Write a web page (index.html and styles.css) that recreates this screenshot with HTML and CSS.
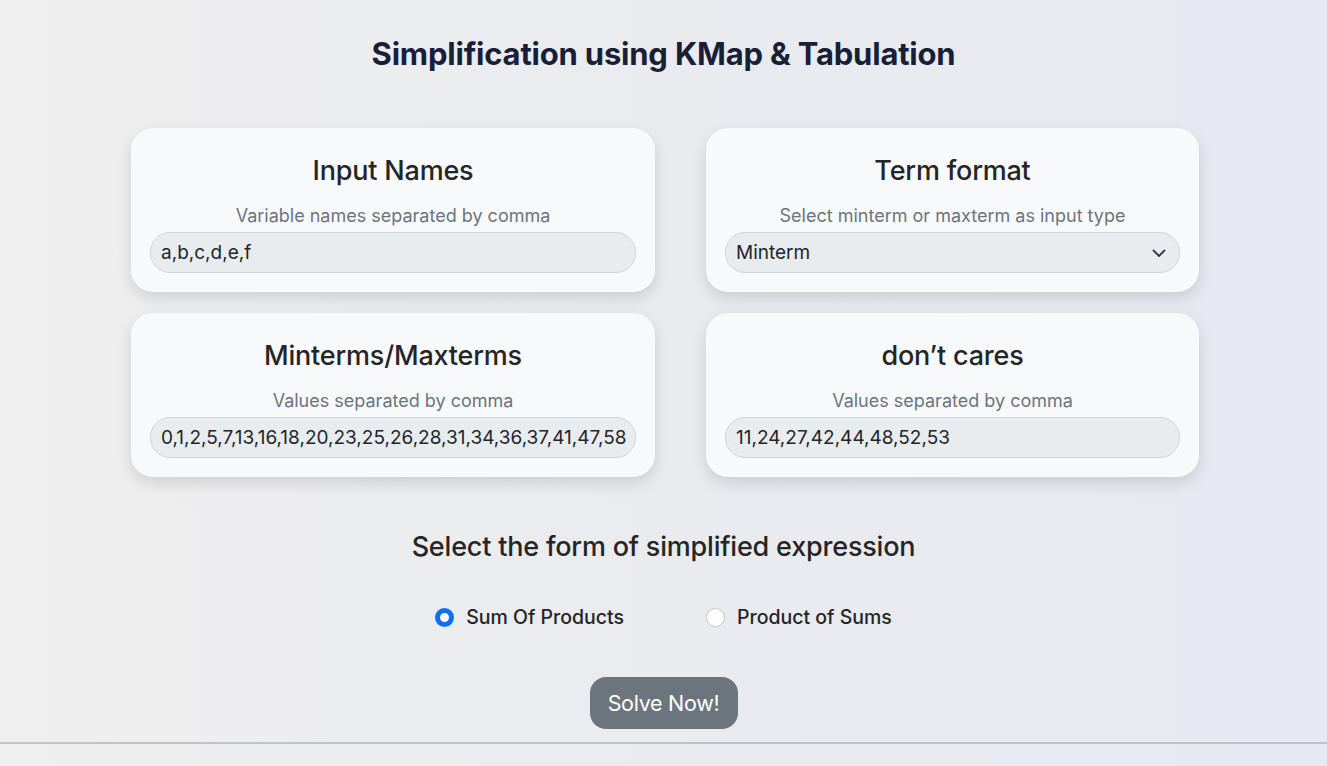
FILE: index.html
```html
<!DOCTYPE html>
<html lang="en">
<head>
<meta charset="utf-8">
<title>Simplification using KMap &amp; Tabulation</title>
<link rel="stylesheet" href="styles.css">
</head>
<body>
<main class="page">
  <h1 class="title">Simplification using KMap &amp; Tabulation</h1>
  <section class="grid">
    <div class="card">
      <h2 class="card-title">Input Names</h2>
      <p class="hint">Variable names separated by comma</p>
      <input class="field" type="text" value="a,b,c,d,e,f">
    </div>
    <div class="card">
      <h2 class="card-title">Term format</h2>
      <p class="hint">Select minterm or maxterm as input type</p>
      <div class="select">
        <span>Minterm</span>
        <svg class="chev" width="16" height="16" viewBox="0 0 16 16"><path d="M2.5 5.5 8 11l5.5-5.5" fill="none" stroke="#343a40" stroke-width="1.8" stroke-linecap="round" stroke-linejoin="round"/></svg>
      </div>
    </div>
    <div class="card">
      <h2 class="card-title">Minterms/Maxterms</h2>
      <p class="hint">Values separated by comma</p>
      <input class="field" type="text" value="0,1,2,5,7,13,16,18,20,23,25,26,28,31,34,36,37,41,47,58">
    </div>
    <div class="card">
      <h2 class="card-title">don’t cares</h2>
      <p class="hint">Values separated by comma</p>
      <input class="field" type="text" value="11,24,27,42,44,48,52,53">
    </div>
  </section>
  <h3 class="form-title">Select the form of simplified expression</h3>
  <div class="radios">
    <label class="radio"><span class="dot on"></span>Sum Of Products</label>
    <label class="radio"><span class="dot"></span>Product of Sums</label>
  </div>
  <div class="actions"><button class="solve">Solve Now!</button></div>
</main>
<hr class="rule">
</body>
</html>
```
FILE: styles.css
```css
html, body {
  margin: 0;
  padding: 0;
}
body {
  min-height: 766px;
  background: linear-gradient(90deg, #efefef 0%, #eaebef 50%, #e6e9f2 100%);
  font-family: Inter, "Noto Sans", sans-serif;
  color: #212529;
}
.page {
  display: flex;
  flex-direction: column;
  align-items: center;
  padding-top: 34px;
}
.title {
  margin: 0;
  font-size: 31px;
  font-weight: 700;
  color: #1a1f38;
  letter-spacing: -0.2px;
  line-height: 40px;
}
.grid {
  display: grid;
  grid-template-columns: 524px 493px;
  column-gap: 51px;
  row-gap: 21px;
  margin-top: 54px;
  margin-left: 3px;
}
.card {
  background: #f8f9fb;
  border-radius: 22px;
  box-shadow: 0 6px 16px rgba(0, 0, 0, 0.13);
  padding: 26px 19px 0;
  height: 164px;
  box-sizing: border-box;
  display: flex;
  flex-direction: column;
  align-items: stretch;
}
.card-title {
  margin: 0;
  text-align: center;
  font-size: 27px;
  font-weight: 500;
  line-height: 34px;
  color: #252525;
  letter-spacing: -0.2px;
}
.hint {
  margin: 17px 0 5px;
  text-align: center;
  font-size: 18px;
  line-height: 22px;
  color: #6c757d;
  font-weight: 400;
}
.field, .select {
  height: 41px;
  box-sizing: border-box;
  border: 1px solid #ced4da;
  border-radius: 20px;
  background: #e9ecef;
  font-family: inherit;
  font-size: 19px;
  letter-spacing: 0;
  color: #212529;
  padding: 0 8px 0 10px;
  width: 100%;
  outline: none;
  flex: none;
}
.select {
  display: flex;
  align-items: center;
  justify-content: space-between;
  padding: 0 12px 0 10px;
}
.chev {
  display: block;
}
.form-title {
  margin: 52px 0 0;
  font-size: 27px;
  font-weight: 500;
  line-height: 36px;
  color: #252525;
  letter-spacing: -0.2px;
}
.radios {
  display: flex;
  gap: 82px;
  margin-top: 39px;
}
.radio {
  display: flex;
  align-items: center;
  font-size: 19.5px;
  font-weight: 500;
  color: #252525;
  line-height: 26px;
}
.dot {
  width: 19px;
  height: 19px;
  box-sizing: border-box;
  border-radius: 50%;
  border: 1px solid #c4c7cb;
  background: #fff;
  margin-right: 12px;
}
.dot.on {
  border: 5px solid #0d6efd;
  background: #fff;
}
.actions {
  margin-top: 47px;
}
.solve {
  width: 148px;
  height: 52px;
  border: none;
  border-radius: 16px;
  background: #6c757d;
  color: #fff;
  font-family: inherit;
  font-size: 21.5px;
  font-weight: 400;
  letter-spacing: -0.3px;
  cursor: pointer;
}
.rule {
  margin: 13px 0 0;
  border: none;
  height: 2px;
  background: #c0c2c8;
}
```
